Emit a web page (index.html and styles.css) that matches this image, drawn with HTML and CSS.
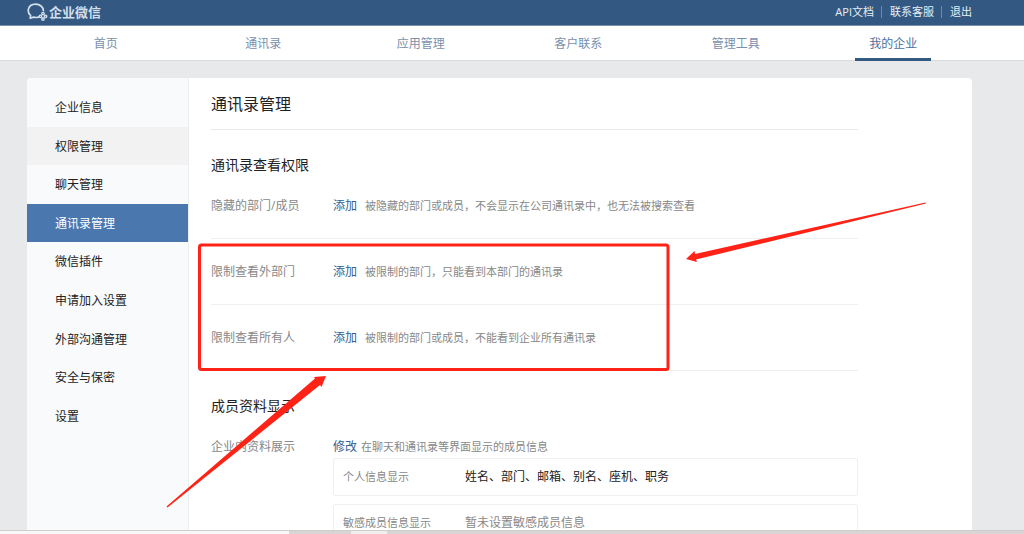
FILE: index.html
```html
<!DOCTYPE html>
<html lang="zh-CN">
<head>
<meta charset="utf-8">
<title>企业微信</title>
<link rel="stylesheet" href="styles.css">
</head>
<body>
<header class="topbar">
  <a class="brand" href="#">
    <svg class="brand-icon" viewBox="0 0 21 18" aria-hidden="true">
      <path d="M11.800 14 C10.200 14.600 8.200 14.600 6.600 14.100 L3.200 15.300 L3.600 12.400 C1.700 10.700 1 8.800 1.300 6.700 C1.900 3.400 4.900 1.200 8.700 1.200 C12.800 1.200 16.200 3.800 16.400 7.700" fill="none" stroke="currentColor" stroke-width="1.700" stroke-linejoin="round" stroke-linecap="round"/>
      <g fill="none" stroke="currentColor" stroke-width="1.400">
        <circle cx="16" cy="10.600" r="1.200"/><circle cx="18.600" cy="13.300" r="1.200"/>
        <circle cx="16" cy="16" r="1.200"/><circle cx="13.400" cy="13.300" r="1.200"/>
      </g>
    </svg>
    <span>企业微信</span>
  </a>
  <nav class="toplinks">
    <a href="#">API文档</a>
    <a href="#">联系客服</a>
    <a href="#">退出</a>
  </nav>
</header>
<nav class="mainnav">
  <a href="#"><span>首页</span></a>
  <a href="#"><span>通讯录</span></a>
  <a href="#"><span>应用管理</span></a>
  <a href="#"><span>客户联系</span></a>
  <a href="#"><span>管理工具</span></a>
  <a class="current" href="#"><span>我的企业</span></a>
</nav>
<main class="page">
  <div class="card">
    <nav class="sidebar">
      <a href="#">企业信息</a>
      <a class="hovered" href="#">权限管理</a>
      <a href="#">聊天管理</a>
      <a class="selected" href="#">通讯录管理</a>
      <a href="#">微信插件</a>
      <a href="#">申请加入设置</a>
      <a href="#">外部沟通管理</a>
      <a href="#">安全与保密</a>
      <a href="#">设置</a>
    </nav>
    <div class="content">
      <h1>通讯录管理</h1>
      <section>
        <h2>通讯录查看权限</h2>
        <div class="row">
          <span class="label">隐藏的部门/成员</span>
          <p><a href="#">添加</a><span class="hint">被隐藏的部门或成员，不会显示在公司通讯录中，也无法被搜索查看</span></p>
        </div>
        <div class="row">
          <span class="label">限制查看外部门</span>
          <p><a href="#">添加</a><span class="hint">被限制的部门，只能看到本部门的通讯录</span></p>
        </div>
        <div class="row">
          <span class="label">限制查看所有人</span>
          <p><a href="#">添加</a><span class="hint">被限制的部门或成员，不能看到企业所有通讯录</span></p>
        </div>
      </section>
      <section>
        <h2>成员资料显示</h2>
        <div class="row profile">
          <span class="label">企业内资料展示</span>
          <div class="profile-body">
            <p><a href="#">修改</a><span class="hint">在聊天和通讯录等界面显示的成员信息</span></p>
            <div class="box"><span class="hint">个人信息显示</span><span>姓名、部门、邮箱、别名、座机、职务</span></div>
            <div class="box"><span class="hint">敏感成员信息显示</span><span class="empty">暂未设置敏感成员信息</span></div>
          </div>
        </div>
      </section>
    </div>
  </div>
</main>
<footer class="taskbar"><span class="taskbar-start"></span><span class="taskbar-gap"></span><span class="taskbar-tab"></span></footer>
<svg class="marks" width="1024" height="534" viewBox="0 0 1024 534" aria-hidden="true">
  <rect x="199.500" y="245" width="468.500" height="124.500" rx="2" fill="none" stroke="#ff2216" stroke-width="3"/>
  <path d="M925.500 202.500 L926 203.500 L696 259.500 L697 262 L686 259 L694.500 251 L695 254 Z" fill="#ff2216"/>
  <path d="M166.500 506.500 L315 378.500 L314 377 L326 376 L321.500 387 L320 385 L167.500 507.500 Z" fill="#ff2216"/>
</svg>
</body>
</html>
```
FILE: styles.css
```css
* { box-sizing: border-box; }
body {
  margin: 0;
  height: 100vh;
  overflow: hidden;
  display: flex;
  flex-direction: column;
  background: #e7e9eb;
  color: #222;
  font: 12px/20px "Open Sans", "Noto Sans CJK SC", sans-serif;
}
a { color: inherit; text-decoration: none; }
h1, h2, p { margin: 0; font-weight: 400; }

.topbar {
  flex: none;
  height: 26px;
  display: flex;
  justify-content: space-between;
  align-items: center;
  padding: 0 52px 2px 27px;
  background: #335983;
  border-bottom: 1px solid #7890ab;
}
.brand { display: flex; align-items: center; gap: 1px; color: #d3dfeb; font-size: 13px; font-weight: 700; }
.brand-icon { width: 21px; height: 18px; }
.toplinks { display: flex; color: #e8eef5; font-size: 11px; line-height: 12px; }
.toplinks a + a { margin-left: 7px; padding-left: 8px; border-left: 1px solid #6f8aa8; }

.mainnav {
  flex: none;
  height: 35px;
  display: flex;
  padding: 0 52px 0 27px;
  background: #fff;
  border-bottom: 1px solid #d9dbdd;
  color: #7890ac;
}
.mainnav a { flex: 1; display: flex; justify-content: center; }
.mainnav span { padding: 0 14px; line-height: 36px; }
.mainnav .current { color: #4c719d; }
.mainnav .current span { height: 35px; border-bottom: 3px solid #335983; }

.page { flex: 1; min-height: 0; padding: 17px 52px 0 27px; }
.card { height: 100%; display: flex; overflow: hidden; background: #fff; border-radius: 4px 4px 0 0; }
.sidebar {
  flex: none;
  width: 162px;
  padding-top: 10px;
  background: #f9fafc;
  border-right: 1px solid #ecedf0;
  display: grid;
  grid-template-rows: repeat(9, calc(347px / 9));
}
.sidebar a { padding: 2px 0 0 28px; display: flex; align-items: center; }
.sidebar .hovered { background: #f2f2f2; }
.sidebar .selected { background: #4a77ad; color: #fff; }

.content { flex: 1; padding: 0 114px 0 22px; }
h1 { font-size: 16px; line-height: 24px; padding: 14px 0 13px; border-bottom: 1px solid #ebebeb; }
h2 { font-size: 14px; line-height: 20px; padding: 25px 0 21px; }
.row { display: flex; margin-bottom: 23px; padding-bottom: 22px; border-bottom: 1px solid #efefef; }
.row:last-child { margin-bottom: 0; }
.row a { color: #33608f; margin-right: 8px; }
.label { flex: none; width: 122px; color: #888; }
.hint { font-size: 11px; color: #888; }
.profile { border: 0; }
.profile a { margin-right: 4px; }
.profile-body { flex: 1; }
.box { display: grid; grid-template-columns: 122px 1fr; align-items: center; padding: 8px 9px; border: 1px solid #f0f0f0; border-radius: 2px; }
.profile-body p { margin-bottom: 1px; }
.box + .box { margin-top: 8px; }
.empty { color: #888; }

.taskbar { flex: none; height: 4px; display: flex; background: #dad5d5; border-top: 1px solid #cfcccd; }
.taskbar-start { width: 289px; background: #f8f8f8; }
.taskbar-gap { width: 62px; }
.taskbar-tab { width: 36px; background: #f0efee; }

.marks { position: absolute; left: 0; top: 0; pointer-events: none; }
```
